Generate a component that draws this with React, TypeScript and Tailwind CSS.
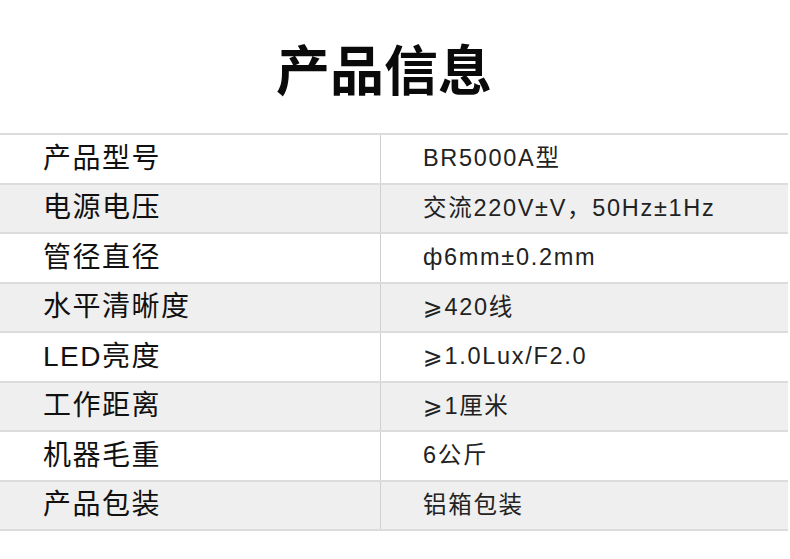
import React from 'react';

// Product spec rows
const specs = [
  { label: "产品型号", value: "BR5000A型" },
  { label: "电源电压", value: "交流220V±V，50Hz±1Hz" },
  { label: "管径直径", value: "ф6mm±0.2mm" },
  { label: "水平清晰度", value: "⩾420线" },
  { label: "LED亮度", value: "⩾1.0Lux/F2.0" },
  { label: "工作距离", value: "⩾1厘米" },
  { label: "机器毛重", value: "6公斤" },
  { label: "产品包装", value: "铝箱包装" },
];

const App = () => {
  return (
    <div
      className="w-[790px] h-[559px] bg-white overflow-hidden"
      style={{ fontFamily: '"Liberation Sans", "Noto Sans CJK SC", "DejaVu Sans", sans-serif' }}
    >
      <h1 className="pt-[38px] pr-[22px] h-[133px] text-center text-[54px] font-bold text-[#0a0a0a] leading-[68px]">
        产品信息
      </h1>

      <div className="w-[788px] border-b-2 border-[#dcdcdc]">
        {specs.map((row, i) => (
          <div
            key={row.label}
            className={`grid grid-cols-[381px_1fr] h-[49.5px] border-t-2 border-[#dcdcdc] ${
              i % 2 === 1 ? "bg-[#efefef]" : "bg-white"
            }`}
          >
            <div className="pl-[43px] flex items-center border-r border-[#cfcfcf] text-[28px] tracking-[1.5px] text-[#111]">
              {row.label}
            </div>
            <div className="pl-[42px] flex items-center text-[23.5px] tracking-[1.7px] text-[#222]">
              {row.value}
            </div>
          </div>
        ))}
      </div>
    </div>
  );
};

export default App;
